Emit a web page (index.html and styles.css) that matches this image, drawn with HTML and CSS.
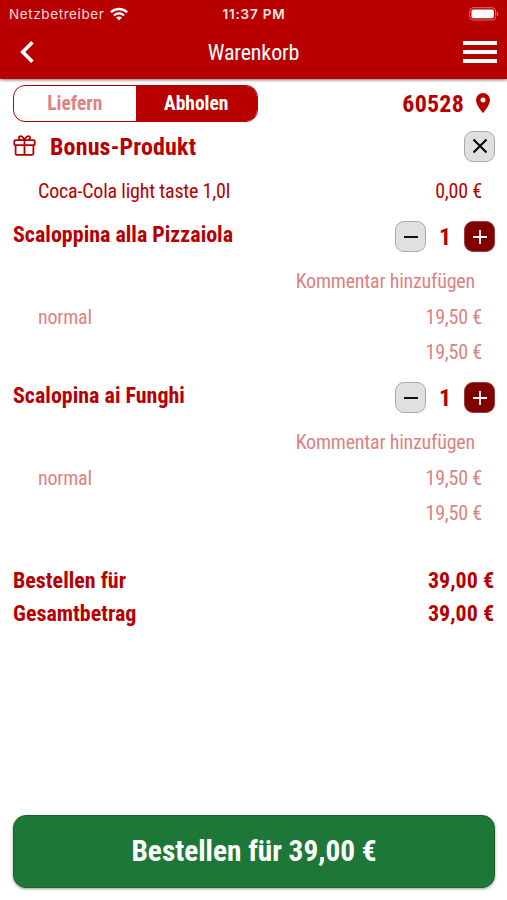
FILE: index.html
```html
<!DOCTYPE html>
<html lang="de">
<head>
<meta charset="utf-8">
<title>Warenkorb</title>
<link rel="stylesheet" href="styles.css">
</head>
<body>
<header class="header">
  <div class="status">
    <div class="carrier"><span>Netzbetreiber</span>
      <svg width="18" height="14" viewBox="0 0 18 14" fill="none" stroke="#fff" stroke-width="2.3"><path d="M.9 5.3C5.4.9 12.6.9 17.1 5.3M3.9 8.5c2.9-2.8 7.3-2.8 10.2 0"/><path d="M9 13.4 6.1 10.5c1.7-1.5 4.1-1.5 5.8 0z" fill="#fff" stroke="none"/></svg>
    </div>
    <span class="clock">11:37 PM</span>
    <svg class="battery" width="30" height="14" viewBox="0 0 30 14"><rect x=".7" y=".7" width="26" height="12.3" rx="3.5" fill="none" stroke="#d87070" stroke-width="1"/><rect x="2.5" y="2.5" width="22.4" height="8.8" rx="1.8" fill="#fff"/><path d="M28 4.8c1.800.6 1.800 3.600 0 4.200z" fill="#d87070"/></svg>
  </div>
  <nav class="nav">
    <svg width="14" height="22" viewBox="0 0 14 22" fill="none" stroke="#fff" stroke-width="3.6"><path d="M12.400 1.300 2.700 11l9.700 9.700"/></svg>
    <h1 class="title">Warenkorb</h1>
    <div class="menu"><i></i><i></i><i></i></div>
  </nav>
</header>
<main class="main">
  <div class="row top">
    <div class="toggle"><span class="off">Liefern</span><span class="on">Abholen</span></div>
    <div class="zip"><span>60528</span>
      <svg width="14" height="20" viewBox="0 0 14 20"><path fill="#b80000" fill-rule="evenodd" d="M7 0a7 7 0 0 0-7 7c0 5.200 7 13 7 13s7-7.800 7-13a7 7 0 0 0-7-7zm0 4.500a2.500 2.500 0 1 1 0 5 2.500 2.500 0 0 1 0-5z"/></svg>
    </div>
  </div>
  <div class="row bonus">
    <div class="bonus-name">
      <svg width="23" height="21" viewBox="0 0 23 21" fill="none" stroke="#b80000" stroke-width="1.800"><rect x="1.300" y="5.200" width="20.400" height="5" rx="1"/><path d="M2.600 10.200v8.300c0 .9.500 1.400 1.400 1.400h15c.9 0 1.400-.5 1.400-1.400v-8.300M11.500 5.200v14.700M11.500 5.200C10 1.500 7.700.4 6.500 1.600c-1.200 1.200-.2 3.100 1.700 3.600M11.500 5.200c1.500-3.700 3.800-4.800 5-3.600 1.200 1.200.2 3.100-1.700 3.600"/></svg>
      <h2>Bonus-Produkt</h2>
    </div>
    <button class="btn" aria-label="Entfernen"><svg width="16" height="16" viewBox="0 0 16 16" stroke="#000" stroke-width="2"><path d="M1.500 1.500l13 13M14.500 1.500l-13 13"/></svg></button>
  </div>
  <div class="row line solid"><span>Coca-Cola light taste 1,0l</span><span>0,00 €</span></div>

  <section class="item">
    <div class="row head"><h3>Scaloppina alla Pizzaiola</h3>
      <div class="qty"><button class="btn" aria-label="Weniger"><svg width="14" height="14" stroke="#111" stroke-width="2"><path d="M0 7h14"/></svg></button><b>1</b><button class="btn plus" aria-label="Mehr"><svg width="14" height="14" stroke="#fff" stroke-width="1.800"><path d="M0 7h14M7 0v14"/></svg></button></div>
    </div>
    <div class="comment">Kommentar hinzufügen</div>
    <div class="row line"><span>normal</span><span>19,50 €</span></div>
    <div class="row line"><span></span><span>19,50 €</span></div>
  </section>
  <section class="item">
    <div class="row head"><h3>Scalopina ai Funghi</h3>
      <div class="qty"><button class="btn" aria-label="Weniger"><svg width="14" height="14" stroke="#111" stroke-width="2"><path d="M0 7h14"/></svg></button><b>1</b><button class="btn plus" aria-label="Mehr"><svg width="14" height="14" stroke="#fff" stroke-width="1.800"><path d="M0 7h14M7 0v14"/></svg></button></div>
    </div>
    <div class="comment">Kommentar hinzufügen</div>
    <div class="row line"><span>normal</span><span>19,50 €</span></div>
    <div class="row line"><span></span><span>19,50 €</span></div>
  </section>

  <div class="totals">
    <div class="row"><span>Bestellen für</span><span>39,00 €</span></div>
    <div class="row"><span>Gesamtbetrag</span><span>39,00 €</span></div>
  </div>
  <button class="order">Bestellen für 39,00 €</button>
</main>
</body>
</html>
```
FILE: styles.css
```css
* { box-sizing: border-box; }
body {
  margin: 0;
  height: 900px;
  display: flex;
  flex-direction: column;
  background: #fff;
  color: #b80000;
  font-family: "Roboto Condensed", Roboto, sans-serif;
  font-stretch: 75%;
  white-space: nowrap;
}
h1, h2, h3 { margin: 0; }
svg { display: block; flex: none; }
button { font: inherit; font-stretch: inherit; padding: 0; }

.header {
  height: 79px;
  flex: none;
  background: #b80000;
  color: #fff;
  box-shadow: 0 1px 3px rgba(0, 0, 0, .55);
}
.status {
  height: 27px;
  display: grid;
  grid-template-columns: 1fr auto 1fr;
  align-items: center;
  padding: 0 8px 0 9px;
  font: 500 13.500px Inter, sans-serif;
  font-stretch: 100%;
}
.carrier { display: flex; align-items: center; gap: 6px; font-weight: 400; letter-spacing: .6px; color: #f9dede; }
.clock { font-weight: 600; font-size: 13.500px; letter-spacing: .8px; color: #fbe8e8; }
.battery { justify-self: end; }
.nav {
  height: 50px;
  display: grid;
  grid-template-columns: 1fr auto 1fr;
  align-items: center;
  padding: 0 10px;
}
.nav > svg { margin-left: 10px; }
.title { font-size: 22px; font-weight: 400; letter-spacing: -.15px; }
.menu { justify-self: end; width: 34px; display: grid; gap: 5px; }
.menu i { height: 4px; background: #fff; }

.main { flex: 1; display: flex; flex-direction: column; padding: 6px 12px 12px 13px; }
.row { display: flex; justify-content: space-between; align-items: center; }
.top { height: 37px; }
.toggle {
  width: 245px;
  height: 37px;
  display: grid;
  grid-template-columns: 1fr 1fr;
  border: 1.500px solid #b80000;
  border-radius: 12px;
  overflow: hidden;
  font-size: 19.500px;
  font-weight: 700;
}
.toggle span { display: grid; place-items: center; padding-bottom: 1px; }
.off { color: #dc8282; }
.on { background: #b80000; color: #fff; }
.zip { display: flex; align-items: center; gap: 12px; padding-right: 5px; font-size: 24px; font-weight: 700; letter-spacing: .2px; }
.zip svg { margin-bottom: 2px; }

.bonus { height: 48px; }
.bonus-name { display: flex; align-items: center; gap: 14px; }
.bonus-name svg { margin-bottom: 1px; }
.bonus h2 { font-size: 24px; font-weight: 700; letter-spacing: .15px; padding-top: 2px; }
.btn {
  width: 31px;
  height: 31px;
  display: grid;
  place-items: center;
  border: 1.500px solid #aaa;
  border-radius: 9px;
  background: #e0e0e0;
}
.plus { background: #800000; border-color: #984040; }
.line { height: 35.500px; padding: 0 13px 0 25px; font-size: 20px; letter-spacing: -.2px; color: #dc8282; }
.solid { height: 41px; color: #b80000; }

.item { height: 161px; }
.head { height: 51px; }
.head h3 { font-size: 22px; font-weight: 700; padding-bottom: 5px; }
.qty { display: grid; grid-template-columns: 31px 38px 31px; align-items: center; text-align: center; }
.qty b { font-size: 24px; }
.comment { height: 37px; line-height: 39px; padding-right: 20px; text-align: right; font-size: 20px; letter-spacing: -.2px; color: #dc8282; }

.totals { margin-top: 31px; font-size: 22px; font-weight: 700; }
.totals .row { height: 33px; padding-right: 1px; }
.order {
  width: 100%;
  height: 73px;
  margin-top: auto;
  padding-bottom: 2px;
  border: 1px solid #176329;
  border-radius: 13px;
  background: #1d7737;
  color: #fff;
  font-size: 29.300px;
  font-weight: 700;
  box-shadow: 0 1px 3px rgba(0, 0, 0, .4);
}
```
